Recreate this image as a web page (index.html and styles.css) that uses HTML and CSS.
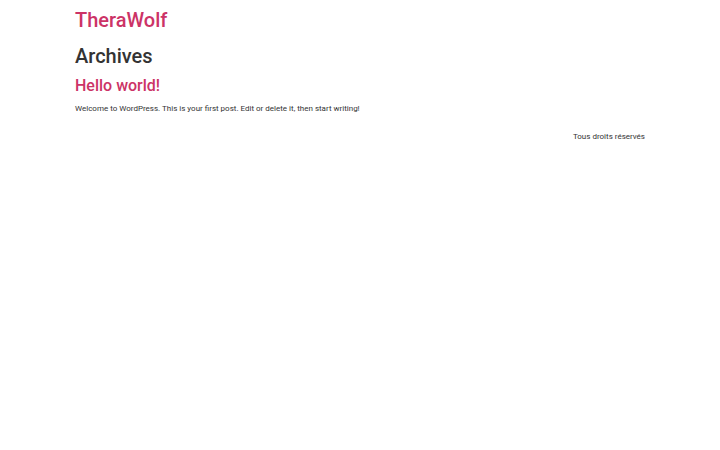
FILE: index.html
```html
<!DOCTYPE html>
<html lang="fr">
<head>
<meta charset="utf-8">
<title>Archives – TheraWolf</title>
<link rel="stylesheet" href="styles.css">
</head>
<body>
<header class="site-header">
  <p class="site-title"><a href="#">TheraWolf</a></p>
</header>
<main class="site-main">
  <div class="page-header">
    <h1 class="entry-title">Archives</h1>
  </div>
  <article class="post">
    <h2 class="post-title"><a href="#">Hello world!</a></h2>
    <p class="excerpt">Welcome to WordPress. This is your first post. Edit or delete it, then start writing!</p>
  </article>
</main>
<footer class="site-footer">
  <p class="copyright">Tous droits réservés</p>
</footer>
</body>
</html>
```
FILE: styles.css
```css
html, body {
  margin: 0;
  padding: 0;
  background: #fff;
}
body {
  font-family: Roboto, "Liberation Sans", sans-serif;
  color: #333;
  font-size: 8px;
  line-height: 1.5;
}
a {
  color: #c36;
  text-decoration: none;
}
.site-header,
.site-main,
.site-footer {
  width: 570px;
  margin: 0 auto;
}
.site-header {
  padding: 8px 0 0;
}
.site-title {
  margin: 0;
  font-size: 20px;
  line-height: 1.2;
  font-weight: 500;
}
.page-header {
  margin-top: 12px;
}
.entry-title {
  margin: 0 0 8px;
  font-size: 20px;
  line-height: 1.2;
  font-weight: 500;
}
.post-title {
  margin: 0 0 8px;
  font-size: 16px;
  line-height: 1.2;
  font-weight: 500;
}
.excerpt {
  margin: 0;
}
.site-footer {
  display: flex;
  justify-content: flex-end;
  padding-top: 15.5px;
}
.copyright {
  margin: 0;
}
```
